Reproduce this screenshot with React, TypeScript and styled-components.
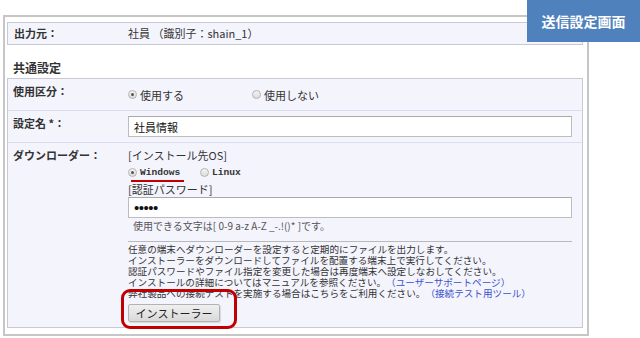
import React from 'react';
import styled, { createGlobalStyle } from 'styled-components';

const GlobalStyle = createGlobalStyle`
  html, body {
    margin: 0;
    padding: 0;
    background: #fff;
  }

  body {
    font-family: "Noto Sans CJK JP", "Noto Sans", sans-serif;
    color: #333;
    text-spacing-trim: space-all;
  }
`;

const Page = styled.div`
  position: relative;
  width: 640px;
  height: 338px;
  overflow: hidden;
  box-sizing: border-box;
  padding: 15px 0 0 3px;
`;

const Badge = styled.div`
  position: absolute;
  top: 0;
  right: 0;
  width: 113px;
  height: 42px;
  display: flex;
  align-items: center;
  justify-content: center;
  background: #4f81bd;
  color: #fff;
  font-size: 14px;
  font-weight: 700;
`;

const Panel = styled.div`
  width: 586px;
  box-sizing: border-box;
  border: 2px solid #c6c6c6;
  padding: 5px 4px 6px 2px;
`;

const Table = styled.div`
  border: 1px solid #c9c9d6;
  background: #f4f4fd;
`;

const Row = styled.div<{ $first?: boolean }>`
  display: grid;
  grid-template-columns: 120px 1fr;
  border-top: ${(p) => (p.$first ? 'none' : '1px solid #dcdcee')};
`;

const SourceRow = styled(Row)`
  border: 1px solid #c9c9d6;
  background: #f4f4fd;
  line-height: 21px;
`;

const Label = styled.div`
  padding: 5px 0 0 5px;
  font-size: 11px;
  font-weight: 700;
  line-height: 14px;
  color: #333;
  white-space: nowrap;
`;

const SourceLabel = styled(Label)`
  padding: 0 0 0 6px;
  line-height: 21px;
`;

const Value = styled.div<{ $pad?: string }>`
  padding: ${(p) => p.$pad ?? '0'};
  padding-right: 10px;
  font-size: 11px;
  color: #333;
  min-width: 0;
`;

const SourceValue = styled(Value)`
  line-height: 21px;
  white-space: nowrap;
`;

const Heading = styled.div`
  padding: 16px 0 3px 6px;
  font-size: 12px;
  font-weight: 700;
  line-height: 14px;
  color: #333;
`;

const RadioGroup = styled.div`
  display: flex;
  align-items: center;
  height: 17px;
`;

const Option = styled.label<{ $width?: number; $mono?: boolean }>`
  position: relative;
  display: flex;
  align-items: center;
  width: ${(p) => (p.$width ? `${p.$width}px` : 'auto')};
  font-family: ${(p) =>
    p.$mono ? '"Liberation Mono", "DejaVu Sans Mono", monospace' : 'inherit'};
  font-size: ${(p) => (p.$mono ? '9.6px' : '11px')};
  font-weight: ${(p) => (p.$mono ? 700 : 400)};
  color: #333;
`;

const Dot = styled.span<{ $checked?: boolean }>`
  position: relative;
  display: inline-block;
  width: 9px;
  height: 9px;
  margin-right: 3px;
  border-radius: 50%;
  box-sizing: border-box;
  border: 1px solid #b4b4b4;
  background: linear-gradient(#f4f4f4, #dcdcdc);

  &::after {
    content: '';
    display: ${(p) => (p.$checked ? 'block' : 'none')};
    position: absolute;
    left: 2px;
    top: 2px;
    width: 3px;
    height: 3px;
    border-radius: 50%;
    background: #555;
  }
`;

const Underline = styled.span`
  position: absolute;
  left: 3px;
  top: 13px;
  width: 53px;
  height: 2px;
  background: #c00000;
`;

const Line = styled.div<{ $lh: number }>`
  line-height: ${(p) => p.$lh}px;
  white-space: nowrap;
`;

const TextInput = styled.input<{ $secret?: boolean }>`
  display: block;
  width: 100%;
  height: 21px;
  box-sizing: border-box;
  margin: 0;
  padding: 0 5px;
  border: 1px solid #bdbdbd;
  border-top-color: #a9a9a9;
  background: #fff;
  font-family: ${(p) =>
    p.$secret ? '"Liberation Sans", sans-serif' : '"Noto Sans CJK JP", sans-serif'};
  font-size: ${(p) => (p.$secret ? '15px' : '11px')};
  letter-spacing: ${(p) => (p.$secret ? '-0.5px' : '0')};
  color: #111;
  outline: none;
`;

const Hint = styled.div`
  margin-top: 1px;
  padding-left: 5px;
  font-size: 10px;
  line-height: 14px;
  color: #555;
  white-space: nowrap;
`;

const Separator = styled.div`
  margin-top: 8px;
  border-top: 1px solid #b9b9b9;
`;

const Notes = styled.div`
  padding-top: 2px;
  font-size: 9.6px;
  line-height: 11px;
  color: #333;
  white-space: nowrap;
`;

const Link = styled.a`
  color: #3a52c8;
  text-decoration: none;
`;

const ButtonWrap = styled.div`
  position: relative;
  display: inline-block;
  margin-top: 5px;
`;

const Button = styled.button`
  display: block;
  width: 92px;
  height: 18px;
  padding: 0;
  border: 1px solid #b3b3b3;
  border-radius: 2px;
  background: linear-gradient(#f0f0f0, #d9d9d9);
  box-shadow: 1px 1px 1px rgba(0, 0, 0, 0.12);
  font-family: "Noto Sans CJK JP", sans-serif;
  font-size: 11px;
  line-height: 16px;
  color: #222;
`;

const Highlight = styled.span`
  position: absolute;
  left: -7px;
  top: -15px;
  width: 116px;
  height: 40px;
  box-sizing: border-box;
  border: 3px solid #c00000;
  border-radius: 9px;
  pointer-events: none;
`;

const App = () => {
  return (
    <Page>
      <GlobalStyle />
      <Panel>
        <SourceRow $first>
          <SourceLabel>出力元：</SourceLabel>
          <SourceValue>社員 （識別子：shain_1）</SourceValue>
        </SourceRow>

        <Heading>共通設定</Heading>

        <Table>
          <Row $first>
            <Label>使用区分：</Label>
            <Value $pad="7px 0 7px 0">
              <RadioGroup>
                <Option $width={124}>
                  <Dot $checked />
                  使用する
                </Option>
                <Option>
                  <Dot />
                  使用しない
                </Option>
              </RadioGroup>
            </Value>
          </Row>

          <Row>
            <Label>設定名 *：</Label>
            <Value $pad="5px 0 5px 0">
              <TextInput type="text" value="社員情報" readOnly />
            </Value>
          </Row>

          <Row>
            <Label>ダウンローダー：</Label>
            <Value $pad="4px 0 5px 0">
              <Line $lh={17}>[インストール先OS]</Line>
              <RadioGroup>
                <Option $width={72} $mono>
                  <Dot $checked />
                  Windows
                  <Underline />
                </Option>
                <Option $mono>
                  <Dot />
                  Linux
                </Option>
              </RadioGroup>
              <Line $lh={16}>[認証パスワード]</Line>
              <TextInput type="password" value="abcde" readOnly $secret />
              <Hint>使用できる文字は[ 0-9 a-z A-Z _-.!()* ]です。</Hint>
              <Separator />
              <Notes>
                <div>任意の端末へダウンローダーを設定すると定期的にファイルを出力します。</div>
                <div>インストーラーをダウンロードしてファイルを配置する端末上で実行してください。</div>
                <div>認証パスワードやファイル指定を変更した場合は再度端末へ設定しなおしてください。</div>
                <div>
                  インストールの詳細についてはマニュアルを参照ください。
                  <Link>（ユーザーサポートページ）</Link>
                </div>
                <div>
                  弊社製品への接続テストを実施する場合はこちらをご利用ください。
                  <Link>（接続テスト用ツール）</Link>
                </div>
              </Notes>
              <ButtonWrap>
                <Button type="button">インストーラー</Button>
                <Highlight />
              </ButtonWrap>
            </Value>
          </Row>
        </Table>
      </Panel>
      <Badge>送信設定画面</Badge>
    </Page>
  );
};

export default App;
